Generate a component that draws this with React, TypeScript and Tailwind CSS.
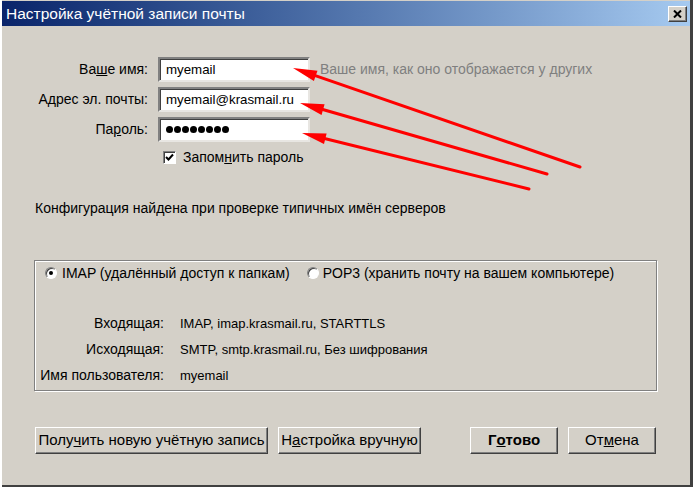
import React from "react";

const font = "font-['Liberation_Sans',Arial,sans-serif]";

// red hand-drawn style arrows pointing at the inputs
const arrows = [
  { x1: 580, y1: 167, x2: 293, y2: 68 },
  { x1: 547, y1: 174, x2: 300, y2: 103 },
  { x1: 529, y1: 189, x2: 302, y2: 133 },
];

function head(a: { x1: number; y1: number; x2: number; y2: number }) {
  const dx = a.x1 - a.x2;
  const dy = a.y1 - a.y2;
  const len = Math.hypot(dx, dy);
  const ux = dx / len;
  const uy = dy / len;
  const L = 24;
  const W = 5.5;
  const bx = a.x2 + ux * L;
  const by = a.y2 + uy * L;
  return `${a.x2},${a.y2} ${bx - uy * W},${by + ux * W} ${bx + uy * W},${by - ux * W}`;
}

function Field({ children }: { children: React.ReactNode }) {
  return (
    <div className="h-[25px] bg-white border-2 border-t-[#808080] border-l-[#808080] border-r-[#e8e6e2] border-b-[#e8e6e2] shadow-[inset_1px_1px_0_#404040] flex items-center pl-[6px] text-[13.3px] text-black">
      {children}
    </div>
  );
}

function Button({ children, w, bold }: { children: React.ReactNode; w: string; bold?: boolean }) {
  return (
    <div
      className={`${w} h-[27px] flex items-center justify-center border border-t-white border-l-white border-r-[#404040] border-b-[#404040] shadow-[inset_-1px_-1px_0_#808080] text-[15px] text-black ${bold ? "font-bold" : ""}`}
    >
      {children}
    </div>
  );
}

function Radio({ checked }: { checked?: boolean }) {
  return (
    <div className="w-[12px] h-[12px] rounded-full bg-white border border-t-[#808080] border-l-[#808080] border-r-white border-b-white shadow-[inset_1px_1px_0_#404040] flex items-center justify-center">
      {checked && <div className="w-[4px] h-[4px] rounded-full bg-black" />}
    </div>
  );
}

export default function App() {
  return (
    <div
      className={`relative w-[693px] h-[487px] overflow-hidden bg-[#d4d0c8] ${font} shadow-[inset_2px_0_0_#ffffff,inset_-3px_0_0_#404040,inset_0_-2px_0_#404040]`}
    >
      {/* Title bar */}
      <div className="mt-[1px] mx-[2px] mr-[3px] h-[25px] flex items-center justify-between bg-gradient-to-r from-[#0a246a] to-[#a6caf0]">
        <span className="pl-[4px] text-white text-[15.5px] leading-none">Настройка учётной записи почты</span>
        <div className="mr-[3px] w-[19px] h-[16px] bg-[#d4d0c8] border border-t-white border-l-white border-r-[#404040] border-b-[#404040] shadow-[inset_-1px_-1px_0_#808080] flex items-center justify-center">
          <svg width="9" height="8" viewBox="0 0 9 8">
            <path d="M1 0.5 L8 7.5 M8 0.5 L1 7.5" stroke="#000" strokeWidth="2" />
          </svg>
        </div>
      </div>

      {/* Account fields */}
      <div className="mt-[31px] grid grid-cols-[148px_152px_1fr] gap-x-[10px] gap-y-[5px] text-[14px] text-black">
        <div className="h-[25px] flex items-center justify-end">
          Ва<u>ш</u>е имя:
        </div>
        <Field>myemail</Field>
        <div className="h-[25px] flex items-center text-[#7f7f7f]">Ваше имя, как оно отображается у других</div>

        <div className="h-[25px] flex items-center justify-end">
          А<u>д</u>рес эл. почты:
        </div>
        <Field>myemail@krasmail.ru</Field>
        <div />

        <div className="h-[25px] flex items-center justify-end">
          Па<u>р</u>оль:
        </div>
        <Field>
          <div className="flex gap-[1px]">
            {Array.from({ length: 8 }).map((_, i) => (
              <span key={i} className="w-[7px] h-[7px] rounded-full bg-black" />
            ))}
          </div>
        </Field>
        <div />
      </div>

      <div className="mt-[9px] ml-[163px] h-[13px] flex items-center gap-[7px] text-[14px] text-black">
        <div className="w-[13px] h-[13px] bg-white border border-t-[#808080] border-l-[#808080] border-r-white border-b-white shadow-[inset_1px_1px_0_#404040] flex items-center justify-center">
          <svg width="9" height="9" viewBox="0 0 9 9">
            <path d="M1 4 L3.5 6.5 L8 1.5" stroke="#000" strokeWidth="2" fill="none" />
          </svg>
        </div>
        <span>
          Запом<u>н</u>ить пароль
        </span>
      </div>

      <div className="mt-[36px] ml-[35px] h-[17px] leading-[17px] text-[14px] text-black">
        Конфигурация найдена при проверке типичных имён серверов
      </div>

      {/* Server settings group */}
      <div className="mt-[43px] ml-[34px] w-[623px] h-[131px] border border-[#808080] shadow-[inset_1px_1px_0_#fff,1px_1px_0_#fff] text-[14px] text-black">
        <div className="mt-[4px] pl-[10px] h-[16px] flex items-center">
          <Radio checked />
          <span className="ml-[5px]">IMAP (удалённый доступ к папкам)</span>
          <div className="ml-[17px]">
            <Radio />
          </div>
          <span className="ml-[4px]">POP3 (хранить почту на вашем компьютере)</span>
        </div>

        <div className="mt-[34px] grid grid-cols-[129px_1fr] gap-x-[16px] gap-y-[9px]">
          <div className="h-[17px] leading-[17px] text-right">Входящая:</div>
          <div className="h-[17px] leading-[17px] text-[13px]">IMAP, imap.krasmail.ru, STARTTLS</div>
          <div className="h-[17px] leading-[17px] text-right">Исходящая:</div>
          <div className="h-[17px] leading-[17px] text-[13px]">SMTP, smtp.krasmail.ru, Без шифрования</div>
          <div className="h-[17px] leading-[17px] text-right">Имя пользователя:</div>
          <div className="h-[17px] leading-[17px] text-[13px]">myemail</div>
        </div>
      </div>

      {/* Buttons */}
      <div className="mt-[36px] ml-[35px] flex">
        <Button w="w-[233px]">
          Полу<u>ч</u>ить новую учётную запись
        </Button>
        <div className="ml-[10px]">
          <Button w="w-[143px]">
            Н<u>а</u>стройка вручную
          </Button>
        </div>
        <div className="ml-[49px]">
          <Button w="w-[88px]" bold>
            Г<u>о</u>тово
          </Button>
        </div>
        <div className="ml-[10px]">
          <Button w="w-[88px]">
            От<u>м</u>ена
          </Button>
        </div>
      </div>

      {/* Annotation arrows */}
      <svg className="absolute inset-0 pointer-events-none" width="693" height="487" viewBox="0 0 693 487">
        {arrows.map((a, i) => (
          <g key={i}>
            <line x1={a.x1} y1={a.y1} x2={a.x2 + (a.x1 - a.x2) * 0.05} y2={a.y2 + (a.y1 - a.y2) * 0.05} stroke="#ff0000" strokeWidth="3" strokeLinecap="round" />
            <polygon points={head(a)} fill="#ff0000" />
          </g>
        ))}
      </svg>
    </div>
  );
}
